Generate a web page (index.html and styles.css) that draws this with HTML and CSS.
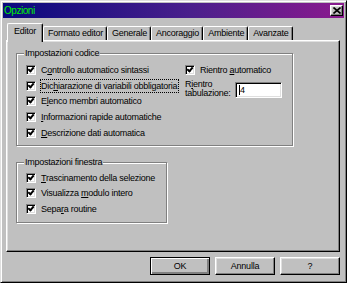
FILE: index.html
```html
<!DOCTYPE html>
<html lang="it">
<head>
    <meta charset="UTF-8">
    <title>Opzioni</title>
    <link rel="stylesheet" href="styles.css">
</head>
<body>
    <div class="window">
        <div class="titlebar">
            <span class="title">Opzioni</span>
            <span class="close">
                <svg width="8" height="7" viewBox="0 0 8 7"><path d="M0.5 0.5 L7.5 6.5 M7.5 0.5 L0.5 6.5" stroke="#000" stroke-width="1.6"/></svg>
            </span>
        </div>

        <div class="tabs">
            <div class="tab active">Editor</div>
            <div class="tab">Formato editor</div>
            <div class="tab">Generale</div>
            <div class="tab">Ancoraggio</div>
            <div class="tab">Ambiente</div>
            <div class="tab">Avanzate</div>
        </div>

        <div class="panel">
            <!-- Impostazioni codice -->
            <div class="group group-code">
                <div class="group-title">Impostazioni codice</div>
                <div class="group-body">
                    <div class="col-left">
                        <div class="check-row"><span class="box"></span><span class="label">C<u>o</u>ntrollo automatico sintassi</span></div>
                        <div class="check-row"><span class="box"></span><span class="label focus">Dic<u>h</u>iarazione di variabili obbligatoria</span></div>
                        <div class="check-row"><span class="box"></span><span class="label">E<u>l</u>enco membri automatico</span></div>
                        <div class="check-row"><span class="box"></span><span class="label"><u>I</u>nformazioni rapide automatiche</span></div>
                        <div class="check-row"><span class="box"></span><span class="label"><u>D</u>escrizione dati automatica</span></div>
                    </div>
                    <div class="col-right">
                        <div class="check-row"><span class="box"></span><span class="label">Rientro <u>a</u>utomatico</span></div>
                        <div class="indent-row">
                            <span class="indent-label">R<u>i</u>entro<br>tabulazione:</span>
                            <span class="textbox"><span class="caret"></span>4</span>
                        </div>
                    </div>
                </div>
            </div>

            <!-- Impostazioni finestra -->
            <div class="group group-window">
                <div class="group-title">Impostazioni finestra</div>
                <div class="group-body">
                    <div class="col-left">
                        <div class="check-row"><span class="box"></span><span class="label"><u>T</u>rascinamento della selezione</span></div>
                        <div class="check-row"><span class="box"></span><span class="label">Visualizza <u>m</u>odulo intero</span></div>
                        <div class="check-row"><span class="box"></span><span class="label">Sepa<u>r</u>a routine</span></div>
                    </div>
                </div>
            </div>
        </div>

        <div class="buttons">
            <div class="btn default">OK</div>
            <div class="btn">Annulla</div>
            <div class="btn">?</div>
        </div>
    </div>
</body>
</html>
```

FILE: styles.css
```css
body {
    margin: 0;
    background-color: #c0c0c0;
    font-family: "Liberation Sans", Arial, sans-serif;
    font-size: 9px;
    letter-spacing: -0.25px;
    color: #000;
}

.window {
    width: 347px;
    height: 283px;
    box-sizing: border-box;
    border: 1px solid;
    border-color: #dfdfdf #000 #000 #dfdfdf;
    box-shadow: inset 1px 1px #fff, inset -1px -1px #808080;
    padding: 2px;
    display: flex;
    flex-direction: column;
}

/* Barra del titolo */
.titlebar {
    height: 15px;
    display: flex;
    align-items: center;
    justify-content: space-between;
    padding: 0 1px 0 1px;
    background: linear-gradient(to right, #08087e, #4a1f8c 55%, #8a1a8e);
}

.title {
    color: #00f000;
    font-size: 10px;
    letter-spacing: -0.45px;
}

.close {
    width: 13px;
    height: 11px;
    box-sizing: border-box;
    background-color: #c0c0c0;
    border: 1px solid;
    border-color: #fff #000 #000 #fff;
    box-shadow: inset -1px -1px #808080, inset 1px 1px #dfdfdf;
    display: flex;
    align-items: center;
    justify-content: center;
}

.close svg {
    display: block;
}

/* Schede */
.tabs {
    display: flex;
    align-items: flex-end;
    height: 17px;
    margin-top: 5px;
    padding-left: 4px;
}

.tab {
    height: 14px;
    box-sizing: border-box;
    padding: 0 3px 0 4px;
    line-height: 12px;
    border-top: 1px solid #fff;
    border-left: 1px solid #fff;
    border-right: 1px solid #000;
    border-radius: 2px 2px 0 0;
    box-shadow: inset -1px 0 #808080;
    white-space: nowrap;
}

.tab.active {
    height: 19px;
    margin-bottom: -2px;
    padding: 0 6px;
    line-height: 15px;
    background-color: #c0c0c0;
    position: relative;
    z-index: 1;
}

/* Pannello */
.panel {
    height: 212px;
    box-sizing: border-box;
    margin: 0 4px 0 3px;
    padding: 12px 0 0 9px;
    border: 1px solid;
    border-color: #fff #000 #000 #fff;
    box-shadow: inset -1px -1px #808080, inset 1px 1px #dfdfdf;
}

.group {
    box-sizing: border-box;
    border: 1px solid #808080;
    box-shadow: inset 1px 1px #fff, 1px 1px #fff;
}

.group-code {
    width: 277px;
}

.group-window {
    width: 151px;
    margin-top: 16px;
}

.group-title {
    width: fit-content;
    margin: -7px 0 0 7px;
    padding: 0 1px;
    line-height: 12px;
    background-color: #c0c0c0;
}

.group-body {
    display: flex;
    padding: 3px 0 4px 9px;
}

.group-window .group-body {
    padding: 2px 0 5px 9px;
}

.col-left {
    width: 159px;
}

.check-row {
    height: 15.75px;
    display: flex;
    align-items: center;
    gap: 4px;
    white-space: nowrap;
}

.box {
    width: 10px;
    height: 10px;
    flex: none;
    box-sizing: border-box;
    background-color: #fff;
    border: 1px solid;
    border-color: #808080 #fff #fff #808080;
    box-shadow: inset 1px 1px #000, inset -1px -1px #dfdfdf;
    position: relative;
}

.box::after {
    content: "";
    position: absolute;
    left: 2px;
    top: 0px;
    width: 2px;
    height: 4px;
    border: solid #000;
    border-width: 0 2px 2px 0;
    transform: rotate(40deg);
}

.label {
    border: 1px solid transparent;
    padding: 0 1px 0 0;
    line-height: 12px;
}

.label.focus {
    border: 1px dotted #000;
}

.indent-row {
    display: flex;
    align-items: flex-end;
    margin-top: 2px;
}

.indent-label {
    width: 50px;
    line-height: 9px;
}

.textbox {
    width: 47px;
    height: 16px;
    box-sizing: border-box;
    display: flex;
    align-items: center;
    padding-left: 3px;
    background-color: #fff;
    border: 1px solid;
    border-color: #808080 #fff #fff #808080;
    box-shadow: inset 1px 1px #000, inset -1px -1px #dfdfdf;
}

.caret {
    width: 1px;
    height: 10px;
    background-color: #000;
}

/* Pulsanti */
.buttons {
    display: flex;
    justify-content: flex-end;
    gap: 5px;
    margin: 5px 4px 0 0;
}

.btn {
    width: 60px;
    height: 18px;
    box-sizing: border-box;
    display: flex;
    align-items: center;
    justify-content: center;
    border: 1px solid;
    border-color: #fff #000 #000 #fff;
    box-shadow: inset -1px -1px #808080, inset 1px 1px #dfdfdf;
}

.btn.default {
    border-color: #000;
    box-shadow: inset 1px 1px #fff, inset -1px -1px #808080, inset -2px -2px #808080;
}
```
